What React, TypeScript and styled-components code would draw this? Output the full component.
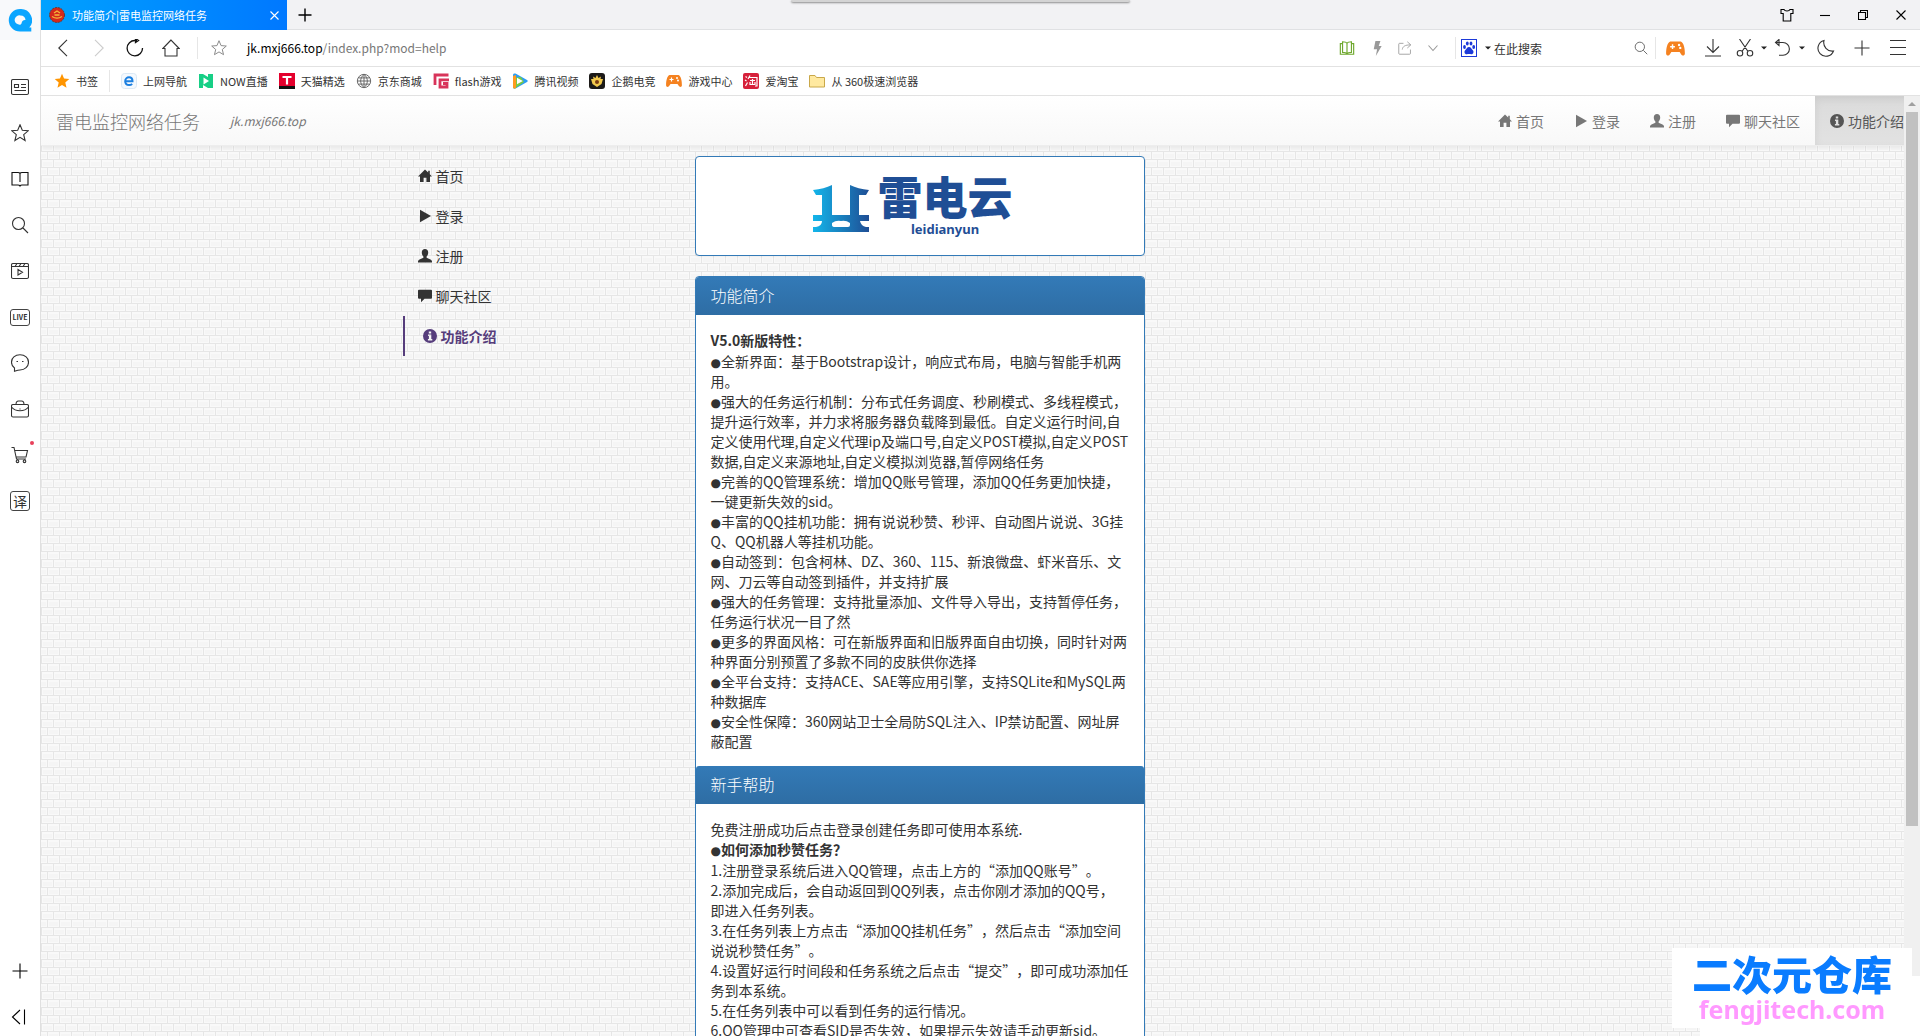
import React from "react";
import styled, { createGlobalStyle, css } from "styled-components";

const fontStack = `"Noto Sans CJK SC", "Noto Sans", sans-serif`;

const GlobalStyle = createGlobalStyle`
  *, *::before, *::after { box-sizing: border-box; }
  html, body { margin: 0; padding: 0; }
  body {
    font-family: ${fontStack};
    font-size: 14px;
    line-height: 20px;
    color: #333;
    background: #fff;
    overflow: hidden;
    text-spacing-trim: space-all;
  }
  a { color: inherit; text-decoration: none; }
  button { font: inherit; color: inherit; border: 0; padding: 0; background: none; cursor: pointer; }
  input { font-family: inherit; border: 0; padding: 0; background: none; outline: none; }
  svg { display: block; flex: none; }
`;

/* ---------- shell ---------- */

const Shell = styled.div`
  display: flex;
  height: 100vh;
  overflow: hidden;
`;

const Rail = styled.aside`
  flex: none;
  width: 41px;
  display: flex;
  flex-direction: column;
  align-items: center;
  background: #fff;
  border-right: 1px solid #e0e0e0;
`;

const RailLogo = styled.button`
  height: 40px;
  width: 40px;
  display: grid;
  place-items: center;
  background: #f8f9fb;
`;

const RailGroup = styled.nav`
  display: flex;
  flex-direction: column;
  padding-top: 24px;
  flex: 1;
`;

const RailFoot = styled.div`
  display: flex;
  flex-direction: column;
  align-items: center;
  gap: 8px;
`;

const RailButton = styled.button<{ $short?: boolean }>`
  position: relative;
  width: 40px;
  height: ${(p) => (p.$short ? 38 : 46)}px;
  display: grid;
  place-items: center;
  color: #333;
`;

const Dot = styled.span`
  position: absolute;
  top: 9px;
  right: 6px;
  width: 4px;
  height: 4px;
  border-radius: 50%;
  background: #e8405a;
`;

const IconLabel = styled.span<{ $size: number; $bold?: boolean }>`
  display: grid;
  place-items: center;
  width: 20px;
  height: ${(p) => (p.$bold ? 17 : 20)}px;
  border: 1px solid #444;
  border-radius: 3px;
  font-size: ${(p) => p.$size}px;
  font-weight: ${(p) => (p.$bold ? 700 : 400)};
  line-height: 14px;
`;

const Main = styled.div`
  flex: 1;
  min-width: 0;
  display: flex;
  flex-direction: column;
`;

/* ---------- browser bars ---------- */

const TabBar = styled.header`
  position: relative;
  flex: none;
  display: flex;
  align-items: center;
  height: 30px;
  background: #f2f2f4;
  border-bottom: 1px solid #e0e1e3;
`;

const Tab = styled.div`
  display: flex;
  align-items: center;
  align-self: flex-start;
  width: 246px;
  height: 30px;
  padding: 0 7px 0 8px;
  gap: 7px;
  color: #fff;
  font-size: 11px;
  background: linear-gradient(90deg, #00a2ff, #0078ff);
`;

const TabTitle = styled.span`
  flex: 1;
  white-space: nowrap;
`;

const PlainButton = styled.button<{ $w?: number }>`
  display: grid;
  place-items: center;
  width: ${(p) => p.$w ?? 36}px;
  height: 30px;
  flex: none;
`;

const WindowControls = styled.div`
  display: flex;
  margin-left: auto;
`;

const DropHandle = styled.div`
  position: absolute;
  left: 750px;
  top: 0;
  width: 339px;
  height: 2px;
  border-radius: 0 0 4px 4px;
  background: #d4d4d4;
  box-shadow: 0 1px 2px #888;
`;

const ToolBar = styled.div`
  flex: none;
  display: flex;
  align-items: center;
  height: 37px;
  padding: 0 4px;
  border-bottom: 1px solid #e2e2e2;
  background: #fff;
`;

const Divider = styled.i<{ $gap?: number }>`
  flex: none;
  width: 1px;
  height: 22px;
  margin-left: ${(p) => p.$gap ?? 0}px;
  background: #e6e6e6;
`;

const AddressBox = styled.div`
  flex: 1;
  min-width: 0;
  display: flex;
  align-items: center;
  padding-left: 7px;
  font-size: 12px;
`;

const AddressText = styled.a`
  color: #777;
  white-space: nowrap;
  b { font-weight: 400; color: #000; }
`;

const SplitButton = styled.button`
  display: grid;
  grid-template-columns: 26px 12px;
  place-items: center;
  height: 30px;
  width: 38px;
  flex: none;
  color: #333;
`;

const SearchInput = styled.input`
  width: 133px;
  font-size: 12px;
  color: #333;
  &::placeholder { color: #333; opacity: 1; }
`;

const BookmarkBar = styled.nav`
  flex: none;
  display: flex;
  align-items: center;
  height: 29px;
  padding-left: 13px;
  gap: 11px;
  border-bottom: 1px solid #e2e2e2;
  background: #fff;
  font-size: 11px;
`;

const Bookmark = styled.a`
  display: flex;
  align-items: center;
  gap: 6px;
  white-space: nowrap;
`;

/* ---------- web page ---------- */

const Viewport = styled.div`
  flex: 1;
  min-height: 0;
  display: flex;
`;

const PageFrame = styled.div`
  position: relative;
  isolation: isolate;
  flex: 1;
  min-width: 0;
  overflow: hidden;
`;

const Backdrop = styled.svg`
  position: absolute;
  inset: 0;
  width: 100%;
  height: 100%;
  z-index: -1;
`;

const brickTile = (
  <pattern id="brick" width="12" height="16" patternUnits="userSpaceOnUse">
    <rect width="12" height="16" fill="#f9f9f9" />
    <path d="M2 2h9v4H2zM0 10h5v4H0zM8 10h4v4H8z" fill="#f5f5f5" />
    <path d="M0 7.5h12M0 15.5h12M.5 0v8M6.5 8v8" stroke="#e6e6e6" />
  </pattern>
);

const NavBar = styled.header`
  display: flex;
  align-items: center;
  height: 50px;
  padding-left: 15px;
  overflow: hidden;
  color: #777;
  background: linear-gradient(#fff, #f8f8f8);
  border-bottom: 1px solid #ededed;
  box-shadow: 0 1px 5px rgba(0, 0, 0, 0.075);
`;

const Brand = styled.a`
  font-size: 18px;
  font-weight: 300;
  white-space: nowrap;
`;

const BrandNote = styled.em`
  margin-left: 30px;
  font-size: 12px;
  flex: 1;
`;

const NavLinks = styled.nav`
  display: flex;
  height: 50px;
  margin-right: -15px;
`;

const NavLink = styled.a<{ $active?: boolean }>`
  display: flex;
  align-items: center;
  gap: 4px;
  padding: 0 15px;
  white-space: nowrap;
  ${(p) =>
    p.$active &&
    css`
      color: #555;
      background: linear-gradient(#dbdbdb, #e2e2e2);
      box-shadow: inset 0 3px 9px rgba(0, 0, 0, 0.075);
    `}
`;

const Container = styled.div`
  display: grid;
  grid-template-columns: 292px 480px 1fr;
  max-width: 1170px;
  margin: 10px auto 0;
`;

const SideMenu = styled.nav`
  display: flex;
  flex-direction: column;
  padding: 0 15px;
`;

const SideLink = styled.a<{ $active?: boolean }>`
  display: flex;
  align-items: center;
  gap: 4px;
  height: 40px;
  padding-left: 15px;
  ${(p) =>
    p.$active &&
    css`
      padding-left: 18px;
      border-left: 2px solid #563d7c;
      color: #563d7c;
      font-weight: 700;
    `}
`;

const Column = styled.main`
  padding: 0 15px;
`;

const Panel = styled.section`
  border: 1px solid #337ab7;
  border-radius: 4px;
  background: #fff;
  margin-bottom: 20px;
  box-shadow: 0 1px 2px rgba(0, 0, 0, 0.05);
`;

const LogoPanel = styled(Panel)`
  display: flex;
  justify-content: center;
  gap: 7px;
  height: 100px;
  padding: 16px 14px 0 0;
`;

const LogoWords = styled.div`
  display: flex;
  flex-direction: column;
  align-items: center;
  color: #1f4e95;
  strong { font-size: 45px; line-height: 46px; font-weight: 900; }
  span { font: 700 13px/20px "Noto Sans", sans-serif; }
`;

const PanelHeading = styled.h3`
  margin: 0;
  height: 38px;
  padding: 0 15px;
  font-size: 16px;
  line-height: 37px;
  font-weight: 300;
  color: #fff;
  border-radius: 3px 3px 0 0;
  background: linear-gradient(#337ab7, #2e6da4);
`;

const PanelBody = styled.div`
  padding: 15px;
`;

const Line = styled.span<{ $strong?: boolean }>`
  display: block;
  white-space: nowrap;
  ${(p) => p.$strong && "font-weight: 700; line-height: 21px;"}
`;

const Bullet = styled.span`
  font-family: "DejaVu Sans", sans-serif;
  font-size: 12px;
  font-weight: 400;
  line-height: 1;
`;

const MidMark = styled.span`
  font-family: "Noto Sans CJK JP", sans-serif;
`;

const ScrollTrack = styled.div`
  flex: none;
  width: 16px;
  display: flex;
  flex-direction: column;
  align-items: center;
  background: #f0f0f0;
  svg { margin: 5px 0; }
`;

const ScrollThumb = styled.div`
  width: 12px;
  height: 76%;
  background: #c1c1c1;
`;

const Watermark = styled.div`
  position: fixed;
  right: 8px;
  bottom: 8px;
  width: 240px;
  height: 80px;
  display: flex;
  flex-direction: column;
  align-items: center;
  background: #fff;
  color: #0a7cff;
  strong { font-size: 40px; line-height: 50px; font-weight: 900; }
  span { font: 700 25px/22px "Noto Sans", sans-serif; color: #ff99ff; }
`;

const WatermarkBase = styled.div`
  position: fixed;
  right: 0;
  bottom: 0;
  width: 220px;
  height: 60px;
  background: #fff;
`;

/* ---------- icons ---------- */

type IconProps = { d: string; size?: number; box?: number; color?: string; fill?: string; w?: number };

const Icon = ({ d, size = 18, box = 18, color = "currentColor", fill = "none", w = 1.1 }: IconProps) => (
  <svg width={size} height={size} viewBox={`0 0 ${box} ${box}`} fill={fill} stroke={color} strokeWidth={w} aria-hidden="true">
    <path d={d} />
  </svg>
);

const starPath = "M9 .8l2.3 5.5 5.9.5-4.5 3.9 1.4 5.8L9 13.4l-5.1 3.1 1.4-5.8L.8 6.8l5.9-.5z";

const Caret = () => (
  <svg width="6" height="4" viewBox="0 0 6 4" aria-hidden="true">
    <path d="M0 .5h6L3 3.5z" fill="#222" />
  </svg>
);

const glyphs = {
  home: "M7 .6L0 7.4h2V13h3.6V8.8h2.8V13H12V7.4h2L11.8 5.2V1.8h-1.6v1.8z",
  play: "M2 .8v12.4L13 7z",
  user: "M7 0C5 0 3.800 1.400 3.800 3.600c0 1.600.7 3.100 1.600 3.900v1.300L1.500 10.500C.5 11 0 11.700 0 12.600v1h14v-1c0-.9-.5-1.600-1.500-2.100L8.600 8.800V7.500c.9-.8 1.600-2.300 1.600-3.900C10.200 1.400 9 0 7 0z",
  chat: "M1 .8h12a1 1 0 011 1v7a1 1 0 01-1 1H6.500L3 13.200V9.800H1a1 1 0 01-1-1v-7a1 1 0 011-1z",
  info: "M7 0a7 7 0 100 14A7 7 0 007 0zM5.800 2.500h2.400v2H5.800zM5 5.600h3.300v4.500h1V11.500H4.900v-1.400h1V7H5z",
};

const Glyph = ({ name }: { name: keyof typeof glyphs }) => (
  <svg width="14" height="14" viewBox="0 0 14 14" aria-hidden="true">
    <path d={glyphs[name]} fill="currentColor" fillRule="evenodd" />
  </svg>
);

const GamePad = ({ size = 16 }: { size?: number }) => (
  <svg width={size} height={size} viewBox="0 0 16 16" aria-hidden="true">
    <path d="M3.500 2h9C15 3 16 8 15.900 12.500c-.2 2-2.500 1.800-3.200.3L11.500 11h-7l-1.200 1.800c-.7 1.500-3 1.700-3.200-.3C0 8 1 3 3.500 2z" fill="#f58220" />
    <path d="M3.500 6.500h4M5.500 4.500v4" stroke="#fff" strokeWidth="1.200" />
    <circle cx="11" cy="5" r="1" fill="#fff" />
    <circle cx="12" cy="7.500" r="1" fill="#fff" />
  </svg>
);

const bookmarkIcons: Record<string, React.ReactNode> = {
  surf: (
    <svg width="16" height="16" viewBox="0 0 16 16">
      <rect x=".5" y=".5" width="15" height="15" rx="3" fill="#f4f9fe" stroke="#dbe8f4" />
      <path d="M4.200 8.200h7.300C11.500 5.700 10 4.300 8 4.300S4.200 5.900 4.200 8.200s1.600 3.800 3.900 3.800c1.400 0 2.300-.4 3-1.200" fill="none" stroke="#1b7fe0" strokeWidth="2" />
    </svg>
  ),
  now: (
    <svg width="16" height="16" viewBox="0 0 16 16">
      <path d="M1 1h4l5 3V1h5v14h-5l-5-3v3H1z" fill="#17cf86" />
      <path d="M5.500 4.500v7L11 8z" fill="#fff" />
    </svg>
  ),
  tmall: (
    <svg width="16" height="16" viewBox="0 0 16 16">
      <path d="M0 0h16v16H0z" fill="#e4002d" />
      <path d="M0 13h16v3H0z" fill="#111" />
      <path d="M3.500 4h9M8 4v7.500" stroke="#fff" strokeWidth="2.200" />
    </svg>
  ),
  globe: <Icon size={16} box={18} color="#666" d="M9 1.500a7.500 7.500 0 100 15 7.500 7.500 0 000-15zM9 1.500c-5 4-5 11 0 15 5-4 5-11 0-15zM9 1.500v15M1.500 9h15M2.500 5.500h13M2.500 12.500h13" />,
  flash: (
    <svg width="16" height="16" viewBox="0 0 16 16">
      <path d="M15.500 2H2v10M16 6.800H7V14h7v-3.500H10" fill="none" stroke="#d8345a" strokeWidth="2.800" />
    </svg>
  ),
  video: (
    <svg width="16" height="16" viewBox="0 0 16 16">
      <path d="M1 2C1 .5 2.500 0 4 .800L15 7c1 .6 1 1.400 0 2L4 15.200C2.500 16 1 15.500 1 14z" fill="#2a9df4" />
      <path d="M1 5L9 4l3 5-9 6.500C1.800 15.700 1 15 1 14z" fill="#7ac943" />
      <path d="M1 3l3-1v13l-1 .5C1.800 15.700 1 15 1 14z" fill="#ff9a1f" />
      <path d="M5 4.800v6.400L10.800 8z" fill="#fff" />
    </svg>
  ),
  esport: (
    <svg width="16" height="16" viewBox="0 0 16 16">
      <rect width="16" height="16" rx="3" fill="#1c1a18" />
      <path d="M8 2l1.500 3L12 3.500 11.500 6 14 6l-1.500 5L8 14l-4.500-3L2 6h2.500L4 3.500 6.500 5z" fill="#f2c94c" />
      <circle cx="8" cy="9" r="2" fill="#7a3b12" />
    </svg>
  ),
  game: <GamePad />,
  tao: (
    <svg width="16" height="16" viewBox="0 0 16 16">
      <rect width="16" height="16" rx="2" fill="#d6203a" />
      <path d="M2.500 3.500l1.500 1M2 7l1.500 1M2.500 13l2-3.500M7 2.500L5 6M6.500 4.500H14V13h-2M7 7.500h5M9.500 6v5.500M7 9v2.500h5V9" fill="none" stroke="#fff" strokeWidth="1.200" />
    </svg>
  ),
  folder: (
    <svg width="16" height="16" viewBox="0 0 16 16">
      <path d="M.5 2.500h5.500l1.500 2h8v9.500H.5z" fill="#ffe9a0" stroke="#c9a84a" />
    </svg>
  ),
};

const bookmarks: [string, string][] = [
  ["surf", "上网导航"],
  ["now", "NOW直播"],
  ["tmall", "天猫精选"],
  ["globe", "京东商城"],
  ["flash", "flash游戏"],
  ["video", "腾讯视频"],
  ["esport", "企鹅电竞"],
  ["game", "游戏中心"],
  ["tao", "爱淘宝"],
  ["folder", "从 360极速浏览器"],
];

const railItems: { label: string; icon: React.ReactNode; dot?: boolean }[] = [
  { label: "新闻", icon: <Icon d="M2 1.500h14q1.500 0 1.500 1.500v12q0 1.500-1.500 1.500H2Q.5 16.500.5 15V3Q.5 1.500 2 1.500zM3.500 6.500h4v3h-4zM10 6.500h5M10 9.500h5M3.500 12.500H15" /> },
  { label: "收藏", icon: <Icon d={starPath} /> },
  { label: "阅读", icon: <Icon d="M9 3.500C8.500 2.500 8 2.500 7 2.500H1v12.500H7c1 0 1.500 0 2 1 .5-1 1-1 2-1h6V2.500H11c-1 0-1.500 0-2 1zM9 3.500V12" color="#111" /> },
  { label: "搜索", icon: <Icon d="M7.500 1.500a6 6 0 100 12 6 6 0 000-12zM12 12l5 5" /> },
  { label: "视频", icon: <Icon d="M2 1.500h14q1.500 0 1.500 1.500v12q0 1.500-1.500 1.500H2Q.5 16.500.5 15V3Q.5 1.500 2 1.500zM.5 4.500h17M4 4.500l2-3M8 4.500l2-3M12 4.500l2-3M7 7.500v5.500l4.500-2.700z" /> },
  { label: "直播", icon: <IconLabel $size={7} $bold>LIVE</IconLabel> },
  { label: "消息", icon: <Icon d="M9 .8c5 0 8.500 3.200 8.500 7.400s-3.500 7.800-8.500 7.800c-2 0-3 .4-5.500 1.200V14C1.500 12.500.5 10.500.5 8.200.5 4 4 .8 9 .8zM5.500 7.500h1.500M11 7.500h1.500" /> },
  { label: "工具箱", icon: <Icon d="M2 4.500h14q1.500 0 1.500 1.500v9.500q0 1.500-1.500 1.500H2Q.5 17 .5 15.500V6Q.5 4.500 2 4.500zM5 4.500C5 2 6 1 7.500 1h3C12 1 13 2 13 4.500M.5 7c4 5 13 5 17 0M9 8.500v1" /> },
  { label: "购物", dot: true, icon: <Icon d="M.5 1.500h2.500L5.500 13H15M3.800 4.500H16.500L15 11H5M6.500 14a1.300 1.300 0 100 2.600 1.300 1.300 0 000-2.600zM13.500 14a1.300 1.300 0 100 2.600 1.300 1.300 0 000-2.600z" /> },
  { label: "翻译", icon: <IconLabel $size={14}>译</IconLabel> },
];

const menu: { icon: keyof typeof glyphs; label: string; active?: boolean }[] = [
  { icon: "home", label: "首页" },
  { icon: "play", label: "登录" },
  { icon: "user", label: "注册" },
  { icon: "chat", label: "聊天社区" },
  { icon: "info", label: "功能介绍", active: true },
];

const introLines = [
  "●全新界面：基于Bootstrap设计，响应式布局，电脑与智能手机两",
  "用。",
  "●强大的任务运行机制：分布式任务调度、秒刷模式、多线程模式，",
  "提升运行效率，并力求将服务器负载降到最低。自定义运行时间,自",
  "定义使用代理,自定义代理ip及端口号,自定义POST模拟,自定义POST",
  "数据,自定义来源地址,自定义模拟浏览器,暂停网络任务",
  "●完善的QQ管理系统：增加QQ账号管理，添加QQ任务更加快捷，",
  "一键更新失效的sid。",
  "●丰富的QQ挂机功能：拥有说说秒赞、秒评、自动图片说说、3G挂",
  "Q、QQ机器人等挂机功能。",
  "●自动签到：包含柯林、DZ、360、115、新浪微盘、虾米音乐、文",
  "网、刀云等自动签到插件，并支持扩展",
  "●强大的任务管理：支持批量添加、文件导入导出，支持暂停任务，",
  "任务运行状况一目了然",
  "●更多的界面风格：可在新版界面和旧版界面自由切换，同时针对两",
  "种界面分别预置了多款不同的皮肤供你选择",
  "●全平台支持：支持ACE、SAE等应用引擎，支持SQLite和MySQL两",
  "种数据库",
  "●安全性保障：360网站卫士全局防SQL注入、IP禁访配置、网址屏",
  "蔽配置",
];

const helpLines = [
  "1.注册登录系统后进入QQ管理，点击上方的“添加QQ账号”。",
  "2.添加完成后，会自动返回到QQ列表，点击你刚才添加的QQ号，",
  "即进入任务列表。",
  "3.在任务列表上方点击“添加QQ挂机任务”，然后点击“添加空间",
  "说说秒赞任务”。",
  "4.设置好运行时间段和任务系统之后点击“提交”，即可成功添加任",
  "务到本系统。",
  "5.在任务列表中可以看到任务的运行情况。",
  "6.QQ管理中可查看SID是否失效，如果提示失效请手动更新sid。",
];

const TextLine = ({ text, strong }: { text: string; strong?: boolean }) => (
  <Line $strong={strong}>
    {text.split(/([●：？])/).map((part, i) =>
      part === "●" ? <Bullet key={i}>●</Bullet> : part === "：" || part === "？" ? <MidMark key={i}>{part}</MidMark> : part,
    )}
  </Line>
);

/* ---------- app ---------- */

export default function App() {
  return (
    <Shell lang="zh-CN">
      <GlobalStyle />
      <Rail>
        <RailLogo aria-label="QQ浏览器">
          <svg width="24" height="24" viewBox="0 0 24 24">
            <path d="M12 1a11.200 11.200 0 100 22.500h11.300V19.500h-2A11.200 11.200 0 0012 1zm.5 6.500a5 5 0 015 4.500c-2.500-.2-3.500 1-4 3.500-.8 1.500-2 1.500-3.500.8A4.500 4.500 0 0112.500 7.500z" fill="#0aa5ff" fillRule="evenodd" />
          </svg>
        </RailLogo>
        <RailGroup aria-label="侧边栏">
          {railItems.map((r) => (
            <RailButton key={r.label} aria-label={r.label}>
              {r.icon}
              {r.dot && <Dot />}
            </RailButton>
          ))}
        </RailGroup>
        <RailFoot>
          <RailButton $short aria-label="添加"><Icon d="M9 1.500v15M1.500 9h15" color="#000" /></RailButton>
          <RailButton $short aria-label="收起"><Icon d="M9 2L1.500 9 9 16M13.500 1.500v15" color="#000" /></RailButton>
        </RailFoot>
      </Rail>

      <Main>
        <TabBar>
          <Tab>
            <svg width="16" height="16" viewBox="0 0 16 16">
              <circle cx="8" cy="8" r="7.500" fill="#d4281c" stroke="#6b3a2a" strokeDasharray="2 1" />
              <path d="M3 9.500c3 2 7 2 10 0M5 6l3-2 3 2M5.500 8h5" stroke="#f5b93a" fill="none" strokeWidth="1.300" />
            </svg>
            <TabTitle>功能简介|雷电监控网络任务</TabTitle>
            <PlainButton $w={12} aria-label="关闭标签页"><Icon size={9} box={9} d="M.5.5l8 8M8.500.5l-8 8" /></PlainButton>
          </Tab>
          <PlainButton aria-label="新标签页"><Icon size={14} box={14} w={1.4} d="M7 .5v13M.5 7h13" color="#000" /></PlainButton>
          <WindowControls>
            <PlainButton $w={38} aria-label="皮肤"><Icon size={14} box={14} color="#000" d="M4 1.500H1v4h2.200V13h7.600V5.500H13v-4h-3C9 3.500 5 3.500 4 1.500z" /></PlainButton>
            <PlainButton $w={38} aria-label="最小化"><Icon size={10} box={10} color="#000" d="M0 5.500h10" /></PlainButton>
            <PlainButton $w={38} aria-label="还原"><Icon size={10} box={10} color="#000" d="M.5 2.500h7v7h-7zM2.500 2.500v-2h7v7h-2" /></PlainButton>
            <PlainButton $w={38} aria-label="关闭"><Icon size={10} box={10} color="#000" d="M.5.5l9 9M9.500.5l-9 9" /></PlainButton>
          </WindowControls>
          <DropHandle />
        </TabBar>

        <ToolBar>
          <PlainButton aria-label="后退"><Icon d="M13 .8L4.800 9l8.200 8.200" /></PlainButton>
          <PlainButton aria-label="前进"><Icon color="#ccc" d="M5 .8L13.200 9 5 17.200" /></PlainButton>
          <PlainButton aria-label="刷新"><Icon color="#111" w={1.3} d="M11 1.500H9A7.700 7.700 0 1016.500 9M9.500-.5l3 2-3 2z" /></PlainButton>
          <PlainButton aria-label="主页"><Icon d="M9 1L.8 9.500H3V17h12V9.500h2.200z" /></PlainButton>
          <Divider $gap={8} />
          <PlainButton $w={42} aria-label="收藏此页"><Icon size={16} color="#888" d={starPath} /></PlainButton>
          <AddressBox>
            <AddressText href="#"><b>jk.mxj666.top</b>/index.php?mod=help</AddressText>
          </AddressBox>
          <PlainButton $w={32} aria-label="阅读模式"><Icon size={16} color="#6fa82e" w={1.3} d="M9 3.500C8 2 6 2 4 2v12c2 0 4 0 5 1.500C10 14 12 14 14 14V2c-2 0-4 0-5 1.500zM9 3.500v12M4 4H1.500v12h15V4H14" /></PlainButton>
          <PlainButton $w={28} aria-label="极速"><Icon size={15} color="none" fill="#999" d="M6.500 0h6l-2 6H14L7 18l1.500-8H4.500z" /></PlainButton>
          <PlainButton $w={28} aria-label="分享"><Icon size={14} color="#999" d="M7 3H2q-1 0-1 1v12q0 1 1 1h13q1 0 1-1v-5M5.500 11C6 7 9 5 16 5M12 1l4.500 4L12 9" /></PlainButton>
          <PlainButton $w={28} aria-label="更多"><Icon size={10} box={10} color="#999" d="M.5 2.500L5 7.500l4.500-5" /></PlainButton>
          <Divider $gap={8} />
          <SplitButton aria-label="搜索引擎">
            <svg width="16" height="18" viewBox="0 0 16 18">
              <rect x=".5" y=".5" width="15" height="17" fill="#fff" stroke="#1c39d8" />
              <path d="M8 8c2 0 2.500 2 3.800 3.200 1.500 1.600.5 4.200-1.600 4-1.500-.2-2.900-.2-4.400 0-2.100.2-3.100-2.400-1.600-4C5.500 10 6 8 8 8z" fill="#1c39d8" />
              <ellipse cx="3.500" cy="8" rx="1.400" ry="1.900" fill="#1c39d8" />
              <ellipse cx="6.300" cy="4.500" rx="1.400" ry="2" fill="#1c39d8" />
              <ellipse cx="10" cy="4.500" rx="1.400" ry="2" fill="#1c39d8" />
              <ellipse cx="12.700" cy="8" rx="1.400" ry="1.900" fill="#1c39d8" />
            </svg>
            <Caret />
          </SplitButton>
          <SearchInput aria-label="搜索" placeholder="在此搜索" />
          <PlainButton $w={28} aria-label="搜索"><Icon size={14} color="#555" d="M7.500 1.500a6 6 0 100 12 6 6 0 000-12zM12 12l5 5" /></PlainButton>
          <Divider />
          <PlainButton $w={38} aria-label="游戏"><GamePad size={19} /></PlainButton>
          <PlainButton $w={38} aria-label="下载"><Icon color="#333" d="M9 0v13M3 7.500L9 13.500l6-6M1 17h16" /></PlainButton>
          <SplitButton aria-label="截图">
            <Icon d="M3.500 0l8.500 12.500M14.500 0L6 12.500M4 11.500a2.500 2.500 0 100 5.500 2.500 2.500 0 000-5.500zM14 11.500a2.500 2.500 0 100 5.500 2.500 2.500 0 000-5.500z" />
            <Caret />
          </SplitButton>
          <SplitButton aria-label="撤销">
            <Icon d="M2 3.500h7a6.300 6.300 0 010 12.800H5M5 .5l-3.500 3 3.500 3z" />
            <Caret />
          </SplitButton>
          <PlainButton aria-label="夜间模式"><Icon d="M7 1.500A8 8 0 1016.500 12 8.500 8.500 0 017 1.500z" /></PlainButton>
          <PlainButton aria-label="扩展"><Icon d="M9 1.500v15M1.500 9h15" /></PlainButton>
          <PlainButton aria-label="菜单"><Icon d="M1 1.500h16M1 8.500h16M1 15.500h16" /></PlainButton>
        </ToolBar>

        <BookmarkBar aria-label="书签栏">
          <Bookmark href="#">
            <Icon size={16} color="none" fill="#ff9500" d={starPath} />
            书签
          </Bookmark>
          <Divider />
          {bookmarks.map(([icon, label]) => (
            <Bookmark href="#" key={icon}>
              {bookmarkIcons[icon]}
              {label}
            </Bookmark>
          ))}
        </BookmarkBar>

        <Viewport>
          <PageFrame>
            <Backdrop aria-hidden="true">
              <defs>{brickTile}</defs>
              <rect width="100%" height="100%" fill="url(#brick)" />
            </Backdrop>
            <NavBar>
              <Brand href="#">雷电监控网络任务</Brand>
              <BrandNote>jk.mxj666.top</BrandNote>
              <NavLinks>
                {menu.map((m) => (
                  <NavLink href="#" key={m.label} $active={m.active}>
                    <Glyph name={m.icon} />
                    {m.label}
                  </NavLink>
                ))}
              </NavLinks>
            </NavBar>
            <Container>
              <SideMenu>
                {menu.map((m) => (
                  <SideLink href="#" key={m.label} $active={m.active}>
                    <Glyph name={m.icon} />
                    {m.label}
                  </SideLink>
                ))}
              </SideMenu>
              <Column>
                <LogoPanel>
                  <svg width="58" height="68" viewBox="0 0 58 68" aria-hidden="true">
                    <defs>
                      <linearGradient id="mark" x1="0" y1="0" x2="1" y2="0">
                        <stop offset="0" stopColor="#13b5ea" />
                        <stop offset="1" stopColor="#1f4e95" />
                      </linearGradient>
                    </defs>
                    <path
                      fill="url(#mark)"
                      fillRule="evenodd"
                      d="M1 17Q12 16 20 12V42H38V12Q46 16 57 17L54 22H47V42H57V48H48Q49 53 54 54H57V59H1V54H4Q10 53 10 48H1V42H10V22H4zM20 50V52Q20 54 23 54H36Q38 54 38 52V50Q34 47 29 48 24 47 20 50z"
                    />
                  </svg>
                  <LogoWords>
                    <strong>雷电云</strong>
                    <span>leidianyun</span>
                  </LogoWords>
                </LogoPanel>
                <Panel>
                  <PanelHeading>功能简介</PanelHeading>
                  <PanelBody>
                    <TextLine strong text="V5.0新版特性：" />
                    {introLines.map((t) => (
                      <TextLine key={t} text={t} />
                    ))}
                  </PanelBody>
                  <PanelHeading>新手帮助</PanelHeading>
                  <PanelBody>
                    <TextLine text="免费注册成功后点击登录创建任务即可使用本系统." />
                    <TextLine strong text="●如何添加秒赞任务？" />
                    {helpLines.map((t) => (
                      <TextLine key={t} text={t} />
                    ))}
                  </PanelBody>
                </Panel>
              </Column>
            </Container>
          </PageFrame>
          <ScrollTrack>
            <svg width="8" height="6" viewBox="0 0 8 6"><path d="M0 5l4-4 4 4z" fill="#a0a0a0" /></svg>
            <ScrollThumb />
          </ScrollTrack>
        </Viewport>
      </Main>
      <WatermarkBase />
      <Watermark>
        <strong>二次元仓库</strong>
        <span>fengjitech.com</span>
      </Watermark>
    </Shell>
  );
}
